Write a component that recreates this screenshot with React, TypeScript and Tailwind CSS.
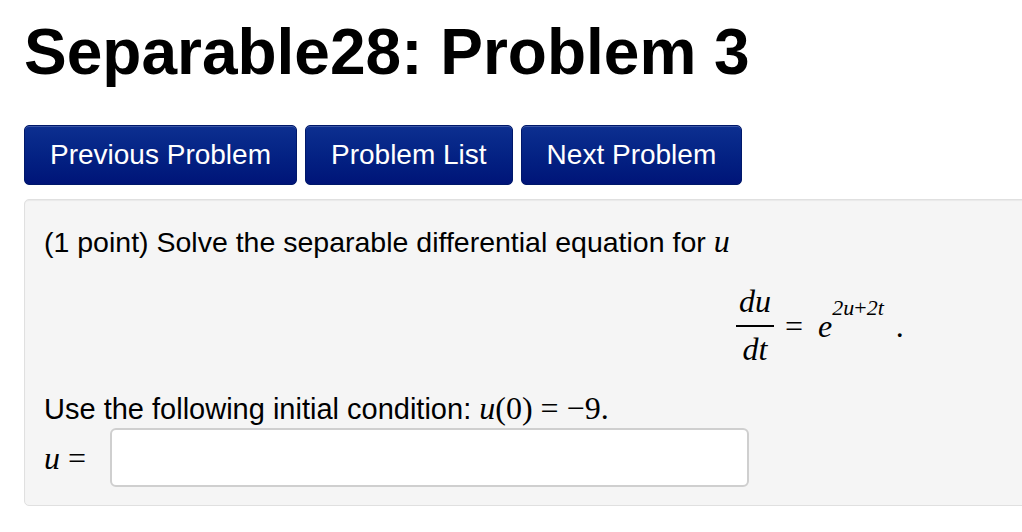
import React from "react";

const sans = { fontFamily: '"Liberation Sans", Arial, sans-serif' };
const serif = { fontFamily: '"Liberation Serif", "Times New Roman", serif' };

function Btn({ children }: { children: React.ReactNode }) {
  return (
    <button
      className="h-[60px] rounded-[5px] border border-[#00186a] bg-gradient-to-b from-[#0d2f90] to-[#001478] px-[25px] text-[28px] text-white shadow-[inset_0_1px_0_rgba(255,255,255,0.2)]"
      style={sans}
    >
      {children}
    </button>
  );
}

export default function App() {
  return (
    <div className="h-[532px] w-[1022px] overflow-hidden bg-white text-black" style={sans}>
      <h1 className="ml-[24px] pt-[16px] text-[64px] font-bold leading-[72px]">
        Separable28: Problem 3
      </h1>
      <div className="ml-[24px] mt-[37px] flex gap-[8px]">
        <Btn>Previous Problem</Btn>
        <Btn>Problem List</Btn>
        <Btn>Next Problem</Btn>
      </div>
      <div className="ml-[24px] mt-[14px] h-[307px] w-[1020px] rounded-[5px] border border-[#e0e0e0] bg-[#f5f5f5] pl-[19px] pt-[24px] shadow-[inset_0_1px_1px_rgba(0,0,0,0.05)]">
        <div className="text-[28.5px] leading-[34px]">
          (1 point) Solve the separable differential equation for{" "}
          <span className="text-[32px] italic" style={serif}>u</span>
        </div>
        <div className="ml-[692px] mt-[25px] flex items-center text-[32px]" style={serif}>
          <div className="flex flex-col items-center">
            <span className="italic leading-[34px]">du</span>
            <span className="mb-[5px] mt-[7px] h-[2px] w-[38px] bg-black"></span>
            <span className="italic leading-[34px]">dt</span>
          </div>
          <span className="ml-[11px] mt-[6px] whitespace-nowrap leading-[34px]">
            =<span className="ml-[15px] italic">e</span>
            <span className="relative -top-[22px] text-[22px] italic">
              2u<span className="not-italic">+</span>2t
            </span>
            <span className="ml-[12px]">.</span>
          </span>
        </div>
        <div className="mt-[25px] text-[29px] leading-[34px]">
          Use the following initial condition:{" "}
          <span className="text-[32px]" style={serif}>
            <i>u</i>(0) = −9.
          </span>
        </div>
        <div className="mt-[2px] flex items-center">
          <span className="w-[66px] text-[32px]" style={serif}>
            <i>u</i> =
          </span>
          <div className="h-[59px] w-[639px] rounded-[6px] border-2 border-[#cfcfcf] bg-white"></div>
        </div>
      </div>
    </div>
  );
}
